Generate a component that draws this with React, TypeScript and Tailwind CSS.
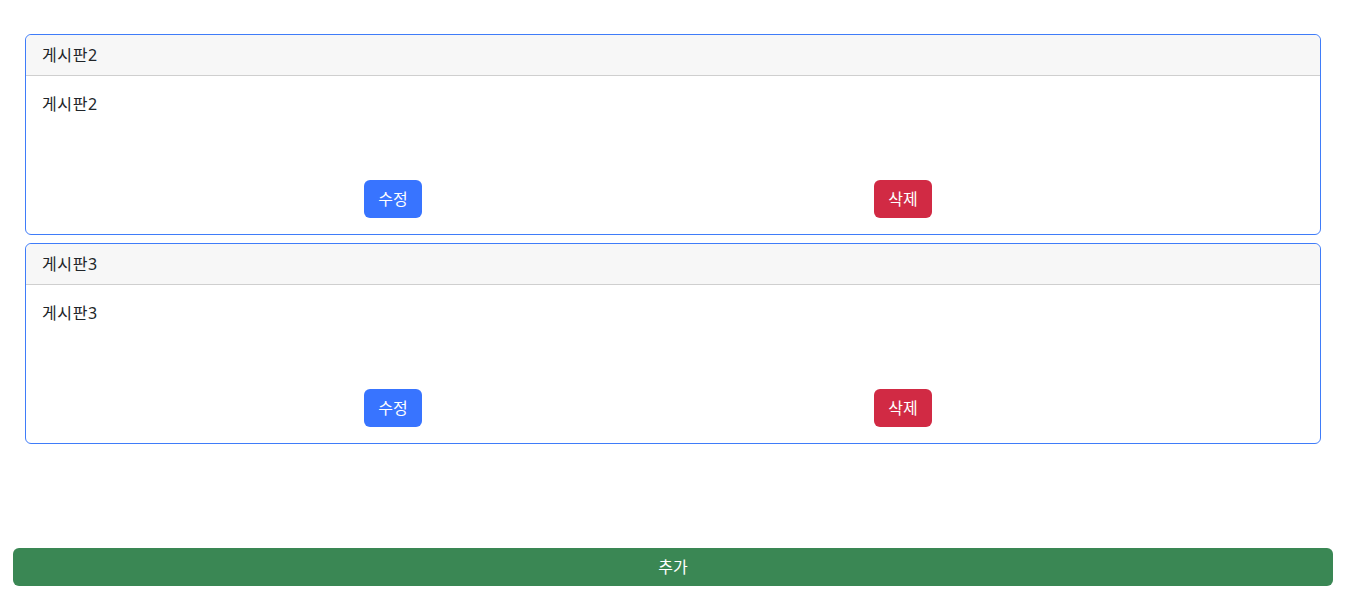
const boards = [
  { id: 2, title: '게시판2', content: '게시판2' },
  { id: 3, title: '게시판3', content: '게시판3' },
]

export default function App() {
  return (
    <div
      className="min-h-screen bg-white text-[16px] text-[#212529]"
      style={{ fontFamily: '"Noto Sans", "Noto Sans CJK KR", sans-serif' }}
    >
      <div className="flex flex-col gap-2 pl-[25px] pr-[33px] pt-[34px]">
        {boards.map((b) => (
          <div key={b.id} className="flex flex-col rounded-[6px] border border-[#3f7cf9]">
            <div className="flex h-[41px] items-center rounded-t-[6px] border-b border-[#cfcfcf] bg-[#f7f7f7] px-4 tracking-[0.6px]">
              {b.title}
            </div>
            <div className="flex flex-col px-4 pb-4 pt-4">
              <p className="leading-6 tracking-[0.6px]">{b.content}</p>
              <div className="mt-[64px] flex gap-[452px] pl-[322px]">
                <button className="h-[38px] w-[58px] rounded-[6px] bg-[#3874ff] text-white">수정</button>
                <button className="h-[38px] w-[58px] rounded-[6px] bg-[#d12a44] text-white">삭제</button>
              </div>
            </div>
          </div>
        ))}
      </div>
      <div className="mt-[104px] pl-[13px] pr-[21px]">
        <button className="h-[38px] w-full rounded-[6px] bg-[#3a8754] text-white">추가</button>
      </div>
    </div>
  )
}
